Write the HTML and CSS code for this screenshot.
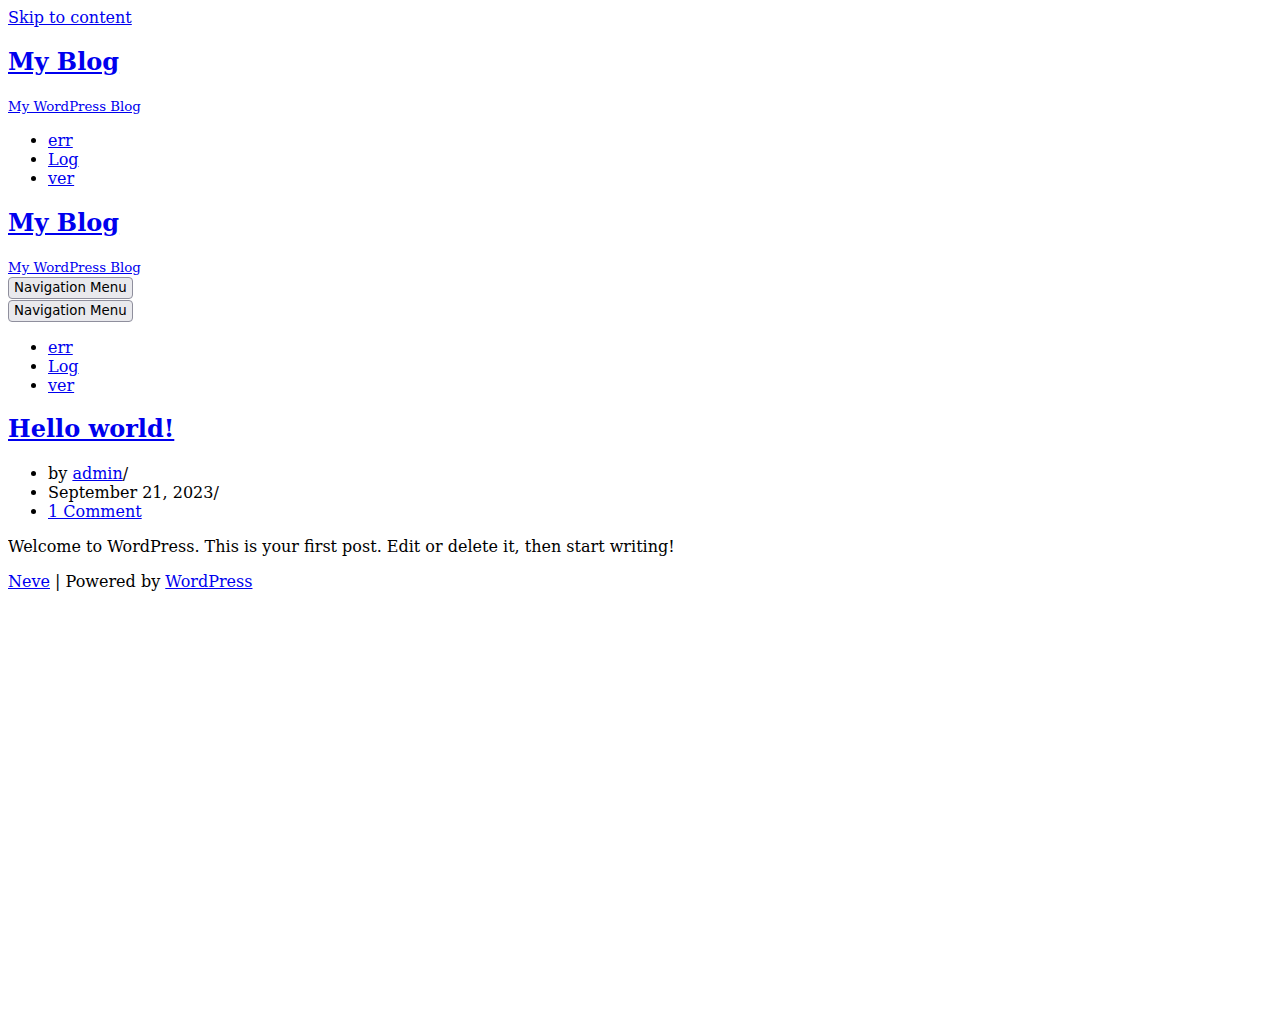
FILE: index.html
```
<!DOCTYPE html>
<html lang="en">
<head>
<meta charset="utf-8">
<title>My Blog</title>
<link rel="stylesheet" href="styles.css">
</head>
<body class="page">
<a class="skip-link" href="#content">Skip to content</a>
<header class="site-header">
  <div class="header-desktop">
    <div class="site-logo">
      <h2 class="site-title"><a href="#">My Blog</a></h2>
      <p class="site-tagline"><a href="#"><small>My WordPress Blog</small></a></p>
    </div>
    <nav class="primary-nav">
      <ul class="menu">
        <li><a href="#">err</a></li>
        <li><a href="#">Log</a></li>
        <li><a href="#">ver</a></li>
      </ul>
    </nav>
  </div>
  <div class="header-mobile">
    <div class="site-logo">
      <h2 class="site-title"><a href="#">My Blog</a></h2>
      <p class="site-tagline tight"><a href="#"><small>My WordPress Blog</small></a></p>
    </div>
    <div class="toggles">
      <button class="nav-toggle" type="button">Navigation Menu</button>
      <button class="nav-toggle" type="button">Navigation Menu</button>
    </div>
    <nav class="primary-nav">
      <ul class="menu">
        <li><a href="#">err</a></li>
        <li><a href="#">Log</a></li>
        <li><a href="#">ver</a></li>
      </ul>
    </nav>
  </div>
</header>
<main id="content" class="site-main">
  <article class="post">
    <h2 class="entry-title"><a href="#">Hello world!</a></h2>
    <ul class="entry-meta">
      <li>by <a href="#">admin</a>/</li>
      <li>September 21, 2023/</li>
      <li><a href="#">1 Comment</a></li>
    </ul>
    <p class="excerpt">Welcome to WordPress. This is your first post. Edit or delete it, then start writing!</p>
  </article>
</main>
<footer class="site-footer">
  <p class="credits"><a href="#">Neve</a> | Powered by <a href="#">WordPress</a></p>
</footer>
</body>
</html>
```

FILE: styles.css
```
html {
  background: #ffffff;
}
.page {
  margin: 8px;
  font-family: "DejaVu Serif", serif;
  font-size: 16px;
  color: #000000;
}
a {
  color: #0000ee;
}
.site-title {
  font-size: 24px;
  font-weight: bold;
  margin: 19.92px 0;
}
.site-tagline {
  margin: 16px 0;
}
.site-tagline.tight {
  margin-bottom: 0;
}
.site-tagline small {
  font-size: 13.333px;
}
.toggles {
  display: flex;
  flex-direction: column;
  align-items: flex-start;
  gap: 1px;
  padding-top: 1px;
}
.nav-toggle {
  font-family: "DejaVu Sans", sans-serif;
  font-size: 13.333px;
  line-height: 16px;
  height: 22px;
  padding: 2px 5px;
  margin: 0;
  color: #000000;
  background: #e9e9ed;
  border: 1px solid #8f8f9d;
  border-radius: 4px;
}
.menu,
.entry-meta {
  margin: 16px 0;
  padding-left: 40px;
}
.entry-title {
  font-size: 24px;
  font-weight: bold;
  margin: 19px 0 21px;
}
.excerpt,
.credits {
  margin: 16px 0;
}
```
